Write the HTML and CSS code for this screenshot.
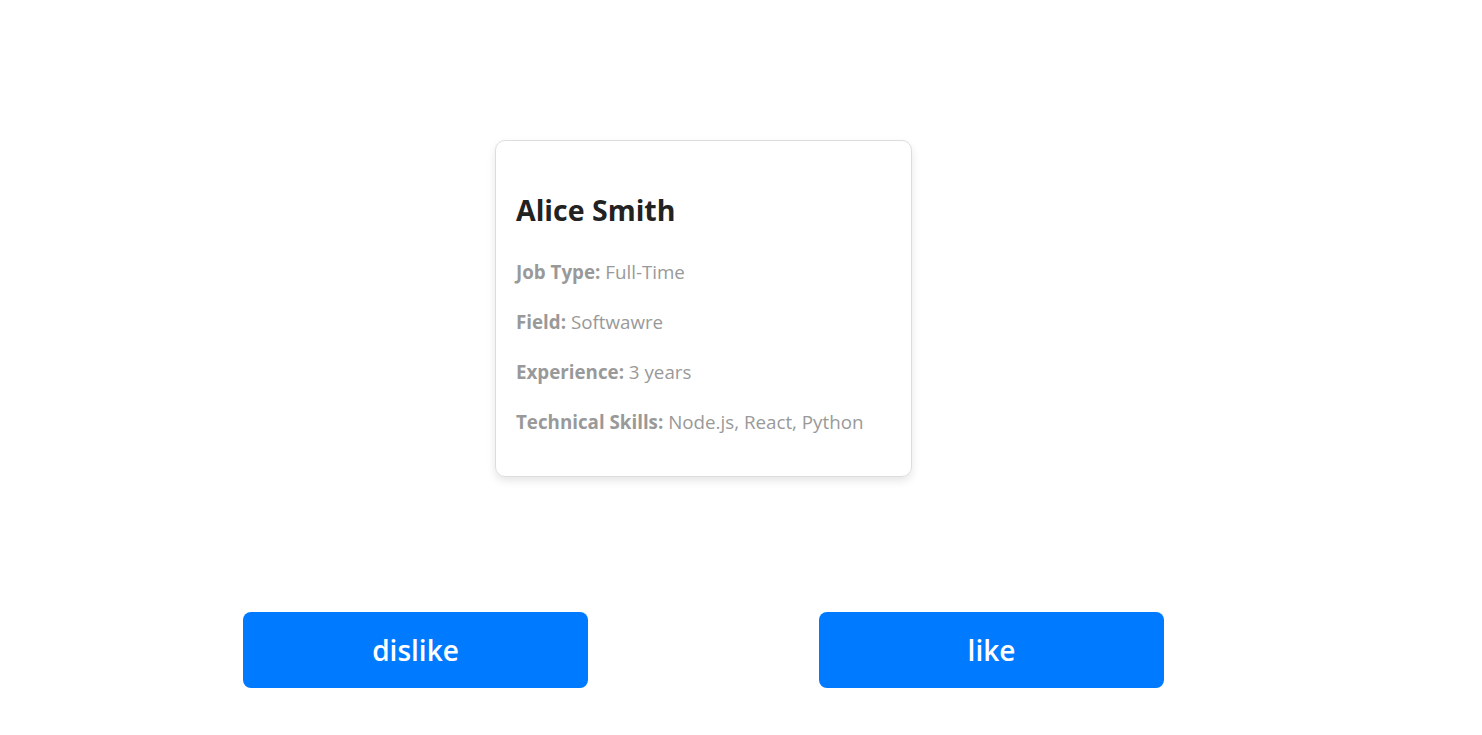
FILE: index.html
```html
<!DOCTYPE html>
<html>
<head>
<meta charset="utf-8">
<link rel="stylesheet" href="styles.css">
</head>
<body>
<div class="page">
  <div class="card-area">
    <div class="card">
      <h2 class="name">Alice Smith</h2>
      <p class="row"><span class="label">Job Type:</span> Full-Time</p>
      <p class="row"><span class="label">Field:</span> Softwawre</p>
      <p class="row"><span class="label">Experience:</span> 3 years</p>
      <p class="row"><span class="label">Technical Skills:</span> Node.js, React, Python</p>
    </div>
  </div>
  <div class="actions">
    <button class="btn">dislike</button>
    <button class="btn">like</button>
  </div>
</div>
</body>
</html>
```
FILE: styles.css
```css
html, body {
  margin: 0;
  padding: 0;
  background: #fff;
}
body {
  font-family: "Open Sans", "Noto Sans", sans-serif;
}
.page {
  width: 921px;
  margin-left: 243px;
  display: flex;
  flex-direction: column;
}
.card-area {
  display: flex;
  justify-content: center;
  padding-top: 140px;
}
.card {
  width: 375px;
  border: 1px solid #ddd;
  border-radius: 10px;
  box-shadow: 0 4px 8px rgba(0,0,0,0.1);
  padding: 51px 20px 36px;
  display: flex;
  flex-direction: column;
  gap: 14px;
}
.name {
  margin: 0 0 12px;
  font-size: 28.5px;
  font-weight: 700;
  color: #222;
  line-height: 36px;
}
.row {
  margin: 0;
  font-size: 18.75px;
  line-height: 36px;
  color: #999;
}
.label {
  font-weight: 700;
}
.actions {
  display: flex;
  justify-content: space-between;
  margin-top: 135px;
}
.btn {
  width: 345px;
  height: 76px;
  border: none;
  border-radius: 8px;
  background: #007bff;
  color: #fff;
  font-family: inherit;
  font-size: 28px;
  font-weight: 600;
}
```
